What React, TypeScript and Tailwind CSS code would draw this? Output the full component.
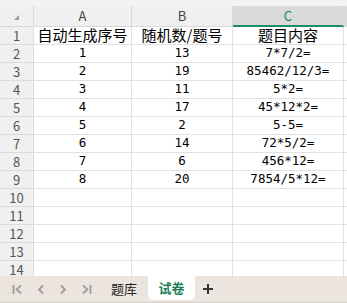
import React from 'react';

const rows: [string, string, string][] = [
  ['自动生成序号', '随机数/题号', '题目内容'],
  ['1', '13', '7*7/2='],
  ['2', '19', '85462/12/3='],
  ['3', '11', '5*2='],
  ['4', '17', '45*12*2='],
  ['5', '2', '5-5='],
  ['6', '14', '72*5/2='],
  ['7', '6', '456*12='],
  ['8', '20', '7854/5*12='],
  ['', '', ''],
  ['', '', ''],
  ['', '', ''],
  ['', '', ''],
  ['', '', ''],
];

const cjk = { fontFamily: '"Noto Sans CJK SC", sans-serif' };
const mono = { fontFamily: '"DejaVu Sans Mono", "Noto Sans CJK SC", monospace' };

const App: React.FC = () => {
  return (
    <div className="w-[347px] h-[303px] overflow-hidden bg-white flex flex-col select-none">
      <div className="h-[276px] overflow-hidden flex flex-col">
        {/* top strip */}
        <div className="h-[6px] shrink-0 bg-[#f2f2f2]" />
        {/* column headers */}
        <div className="flex h-[21px] shrink-0 bg-[#f0f0f0] text-[13px] text-[#444]" style={cjk}>
          <div className="w-[34px] shrink-0 border-r border-b border-[#d9d9d9] flex items-center justify-center">
            <div className="w-0 h-0 border-l-[5px] border-l-transparent border-b-[5px] border-b-[#9a9a9a] mt-[2px]" />
          </div>
          <div className="w-[98px] shrink-0 border-r border-b border-[#d9d9d9] flex items-center justify-center">A</div>
          <div className="w-[101px] shrink-0 border-r border-b border-[#d9d9d9] flex items-center justify-center">B</div>
          <div className="w-[111px] shrink-0 border-r border-[#d9d9d9] border-b-2 border-b-[#1a8f63] bg-[#dadada] text-[#1a7f58] flex items-center justify-center">C</div>
          <div className="flex-1 border-b border-[#d9d9d9] bg-[#dadada]" />
        </div>
        {rows.map((r, i) => (
          <div key={i} className="flex h-[18px] shrink-0">
            <div
              className="w-[34px] shrink-0 bg-[#f0f0f0] border-r border-b border-[#dcdcdc] text-[13px] leading-none text-[#555] flex items-center justify-center"
              style={cjk}
            >
              {i + 1}
            </div>
            {r.map((c, j) => (
              <div
                key={j}
                className={`${j === 0 ? 'w-[98px]' : j === 1 ? 'w-[101px]' : 'w-[111px]'} shrink-0 border-r border-b border-[#e1e1e1] flex items-center justify-center text-black whitespace-nowrap ${i === 0 ? 'text-[15px]' : 'text-[12.5px]'}`}
                style={i === 0 ? cjk : mono}
              >
                {c}
              </div>
            ))}
            <div className="flex-1 border-b border-[#e1e1e1]" />
          </div>
        ))}
      </div>
      {/* sheet tabs */}
      <div className="h-[27px] shrink-0 bg-[#ece4de] flex items-stretch border-b border-[#d6d0cb]" style={cjk}>
        <div className="flex items-center text-[#a19c98] pl-[12px] gap-[14px] w-[100px]">
          <svg width="11" height="11" viewBox="0 0 11 11" fill="none" stroke="currentColor" strokeWidth="1.8">
            <path d="M1.5 1v9M9 1.5L4.5 5.5L9 9.5" />
          </svg>
          <svg width="8" height="11" viewBox="0 0 8 11" fill="none" stroke="currentColor" strokeWidth="1.8">
            <path d="M6 1.5L2 5.5L6 9.5" />
          </svg>
          <svg width="8" height="11" viewBox="0 0 8 11" fill="none" stroke="currentColor" strokeWidth="1.8">
            <path d="M2 1.5L6 5.5L2 9.5" />
          </svg>
          <svg width="11" height="11" viewBox="0 0 11 11" fill="none" stroke="currentColor" strokeWidth="1.8">
            <path d="M9.5 1v9M2 1.5L6.5 5.5L2 9.5" />
          </svg>
        </div>
        <div className="w-[48px] flex items-center justify-center text-[13px] text-[#222]">题库</div>
        <div className="w-[47px] mb-[2px] bg-white rounded-b-[5px] flex items-center justify-center text-[13px] font-bold text-[#1a7f58]">试卷</div>
        <div className="w-[25px] flex items-center justify-center">
          <svg width="10" height="10" viewBox="0 0 10 10" stroke="#333" strokeWidth="2">
            <path d="M5 0v10M0 5h10" />
          </svg>
        </div>
      </div>
    </div>
  );
};

export default App;
